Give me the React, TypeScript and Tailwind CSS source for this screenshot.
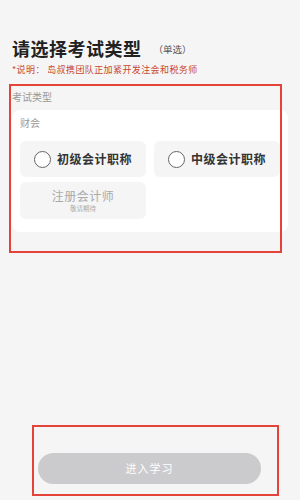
import React from "react";

const font = { fontFamily: '"Noto Sans CJK SC", "Noto Sans", sans-serif' };

function Radio() {
  return <span className="inline-block w-[17px] h-[17px] rounded-full border border-[#666] bg-white shrink-0" />;
}

export default function App() {
  return (
    <div className="relative w-[300px] h-[500px] bg-[#f5f5f5] overflow-hidden" style={font}>
      <div className="pt-[37px] pl-[12px]">
        <div className="flex items-center">
          <span className="text-[18px] leading-[22px] font-bold text-[#222] tracking-[0.5px]">请选择考试类型</span>
          <span className="ml-[12px] text-[9.5px] text-[#555] mt-[2px]">（单选）</span>
        </div>
        <div className="mt-[5px] text-[9px] leading-[12px] text-[#c8472e] tracking-[0.4px]">*说明：&nbsp;岛叔携团队正加紧开发注会和税务师</div>
      </div>
      <div className="mt-[14px] pl-[12px] text-[10px] leading-[14px] text-[#999]">考试类型</div>
      <div className="mt-[6px] ml-[12px] w-[276px] h-[122px] bg-white rounded-[8px] px-[8px] pt-[6px]">
        <div className="text-[10px] leading-[14px] text-[#999]">财会</div>
        <div className="mt-[11px] grid grid-cols-2 gap-x-[8px] gap-y-[5px] w-[260px]">
          <div className="h-[36px] rounded-[6px] bg-[#f5f5f5] flex items-center justify-center gap-[6px]">
            <Radio />
            <span className="text-[12px] font-bold text-[#333] tracking-[0.5px]">初级会计职称</span>
          </div>
          <div className="h-[36px] rounded-[6px] bg-[#f5f5f5] flex items-center justify-center gap-[6px]">
            <Radio />
            <span className="text-[12px] font-bold text-[#333] tracking-[0.5px]">中级会计职称</span>
          </div>
          <div className="h-[37px] rounded-[6px] bg-[#f5f5f5] flex flex-col items-center justify-center gap-[1px]">
            <span className="text-[12px] leading-[14px] text-[#aaa] tracking-[0.5px]">注册会计师</span>
            <span className="text-[6.5px] leading-[8px] text-[#aaa]">敬请期待</span>
          </div>
        </div>
      </div>
      <div className="absolute left-[38px] top-[453px] w-[223px] h-[31px] rounded-full bg-[#cbcbcd] flex items-center justify-center">
        <span className="text-[11px] text-white tracking-[1px]">进入学习</span>
      </div>
      <div className="absolute left-[9px] top-[84px] w-[273px] h-[169px] border-2 border-[#e4433a] pointer-events-none" />
      <div className="absolute left-[32px] top-[425px] w-[247px] h-[71px] border-2 border-[#e4433a] pointer-events-none" />
    </div>
  );
}
